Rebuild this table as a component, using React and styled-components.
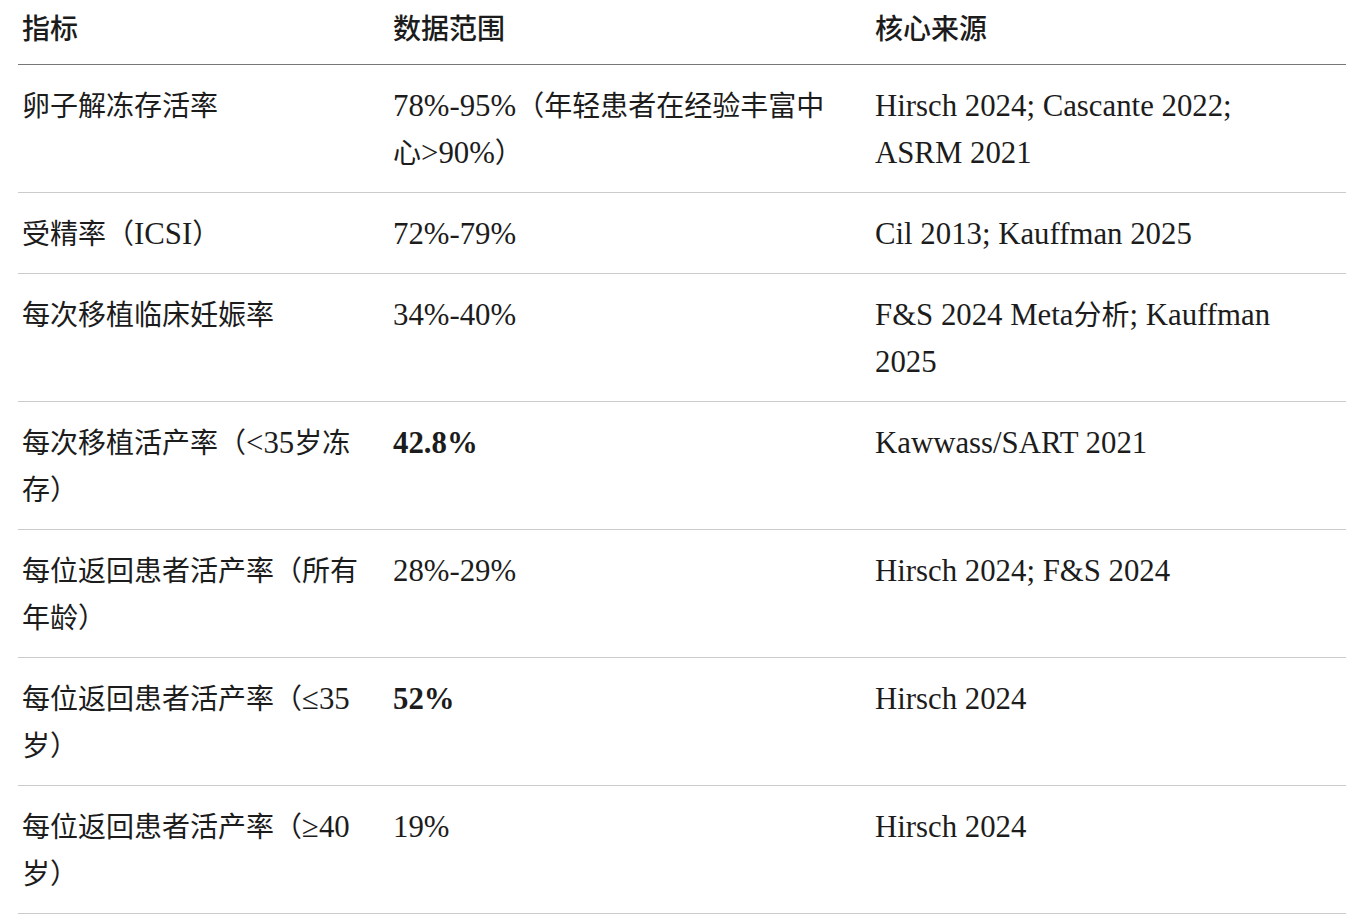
import React from 'react';
import styled, { createGlobalStyle } from 'styled-components';

const GlobalStyle = createGlobalStyle`
  html, body {
    margin: 0;
    padding: 0;
    background: #ffffff;
  }
  body {
    font-family: 'Liberation Serif', 'Noto Sans CJK SC', serif;
    color: #1c1c1c;
  }
`;

const Page = styled.div`
  padding: 0 18px;
`;

const Table = styled.table`
  width: 100%;
  border-collapse: collapse;
  table-layout: fixed;
  font-family: 'Noto Sans CJK SC', sans-serif;
  font-size: 28px;
  line-height: 47px;
`;

const Col = styled.col`
  width: ${(p) => p.$w}px;
`;

const HeadCell = styled.th`
  text-align: left;
  font-weight: 500;
  padding: 4px 30px 13px 4px;
  border-bottom: 1px solid #777777;
  vertical-align: top;
`;

const Row = styled.tr`
  border-bottom: 1px solid #cccccc;
`;

const Cell = styled.td`
  padding: 16px 30px 17px 4px;
  vertical-align: top;
`;

// latin runs are set in a serif a little larger than the CJK text
const Latin = styled.span`
  font-family: 'Liberation Serif', serif;
  font-size: 30.8px;
  line-height: 1;
`;

const Strong = styled.strong`
  font-weight: 700;
`;

const CJK_RUN = /([\u2E80-\u9FFF\u3000-\u303F\uFF00-\uFFEF]+)/;

function Text({ children }) {
  return children
    .split(CJK_RUN)
    .filter(Boolean)
    .map((part, i) =>
      CJK_RUN.test(part) ? <span key={i}>{part}</span> : <Latin key={i}>{part}</Latin>
    );
}

const rows = [
  { name: '卵子解冻存活率', value: '78%-95%（年轻患者在经验丰富中心>90%）', source: 'Hirsch 2024; Cascante 2022; ASRM 2021' },
  { name: '受精率（ICSI）', value: '72%-79%', source: 'Cil 2013; Kauffman 2025' },
  { name: '每次移植临床妊娠率', value: '34%-40%', source: 'F&S 2024 Meta分析; Kauffman 2025' },
  { name: '每次移植活产率（<35岁冻存）', value: '42.8%', bold: true, source: 'Kawwass/SART 2021' },
  { name: '每位返回患者活产率（所有年龄）', value: '28%-29%', source: 'Hirsch 2024; F&S 2024' },
  { name: '每位返回患者活产率（≤35岁）', value: '52%', bold: true, source: 'Hirsch 2024' },
  { name: '每位返回患者活产率（≥40岁）', value: '19%', source: 'Hirsch 2024' },
];

export default function App() {
  return (
    <Page>
      <GlobalStyle />
      <Table>
        <colgroup>
          <Col $w={371} />
          <Col $w={482} />
          <Col $w={475} />
        </colgroup>
        <thead>
          <tr>
            <HeadCell>指标</HeadCell>
            <HeadCell>数据范围</HeadCell>
            <HeadCell>核心来源</HeadCell>
          </tr>
        </thead>
        <tbody>
          {rows.map((r) => (
            <Row key={r.name}>
              <Cell><Text>{r.name}</Text></Cell>
              <Cell>
                {r.bold ? <Strong><Text>{r.value}</Text></Strong> : <Text>{r.value}</Text>}
              </Cell>
              <Cell><Text>{r.source}</Text></Cell>
            </Row>
          ))}
        </tbody>
      </Table>
    </Page>
  );
}
